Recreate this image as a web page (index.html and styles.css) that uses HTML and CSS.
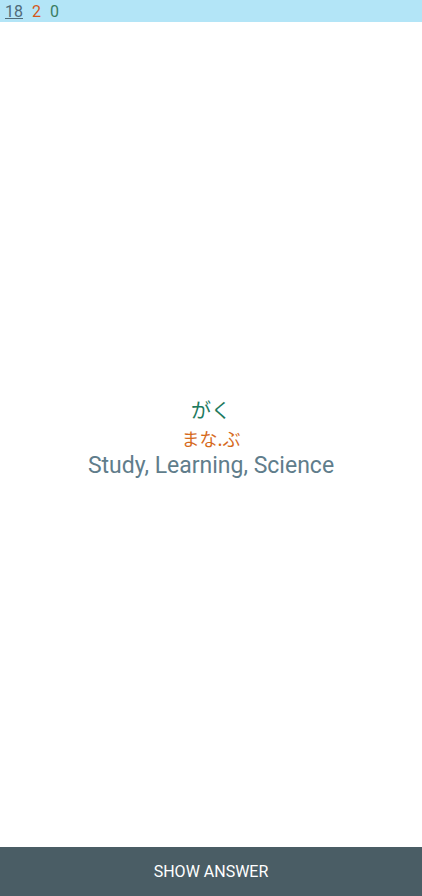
FILE: index.html
```html
<!DOCTYPE html>
<html>
<head>
<meta charset="utf-8">
<link rel="stylesheet" href="styles.css">
</head>
<body>
<div class="app">
  <div class="counts">
    <span class="count new">18</span>
    <span class="count learn">2</span>
    <span class="count review">0</span>
  </div>
  <div class="card">
    <div class="reading-on">がく</div>
    <div class="reading-kun">まな.ぶ</div>
    <div class="meaning">Study, Learning, Science</div>
  </div>
  <div class="answer-btn">SHOW ANSWER</div>
</div>
</body>
</html>
```
FILE: styles.css
```css
html, body {
  margin: 0;
  padding: 0;
  background: #ffffff;
}
.app {
  display: flex;
  flex-direction: column;
  height: 896px;
  width: 422px;
  font-family: Roboto, "Noto Sans CJK JP", sans-serif;
}
.counts {
  height: 22px;
  background: #b3e5f7;
  display: flex;
  align-items: center;
  padding-left: 5px;
  gap: 9px;
  font-size: 16px;
}
.count.new {
  color: #4f6b78;
  text-decoration: underline;
}
.count.learn { color: #d4581c; }
.count.review { color: #3a7d62; }
.card {
  flex: 1;
  display: flex;
  flex-direction: column;
  align-items: center;
  justify-content: center;
  padding-top: 6px;
}
.reading-on {
  color: #1e7a5e;
  font-size: 20px;
  line-height: 28px;
  font-family: "Noto Sans CJK JP", sans-serif;
}
.reading-kun {
  color: #d66a1c;
  font-size: 18px;
  line-height: 28px;
  font-family: "Noto Sans CJK JP", sans-serif;
}
.meaning {
  color: #607d8b;
  font-size: 23px;
  line-height: 28px;
}
.answer-btn {
  height: 49px;
  background: #4a5d65;
  color: #ffffff;
  display: flex;
  align-items: center;
  justify-content: center;
  font-size: 16px;
}
```
